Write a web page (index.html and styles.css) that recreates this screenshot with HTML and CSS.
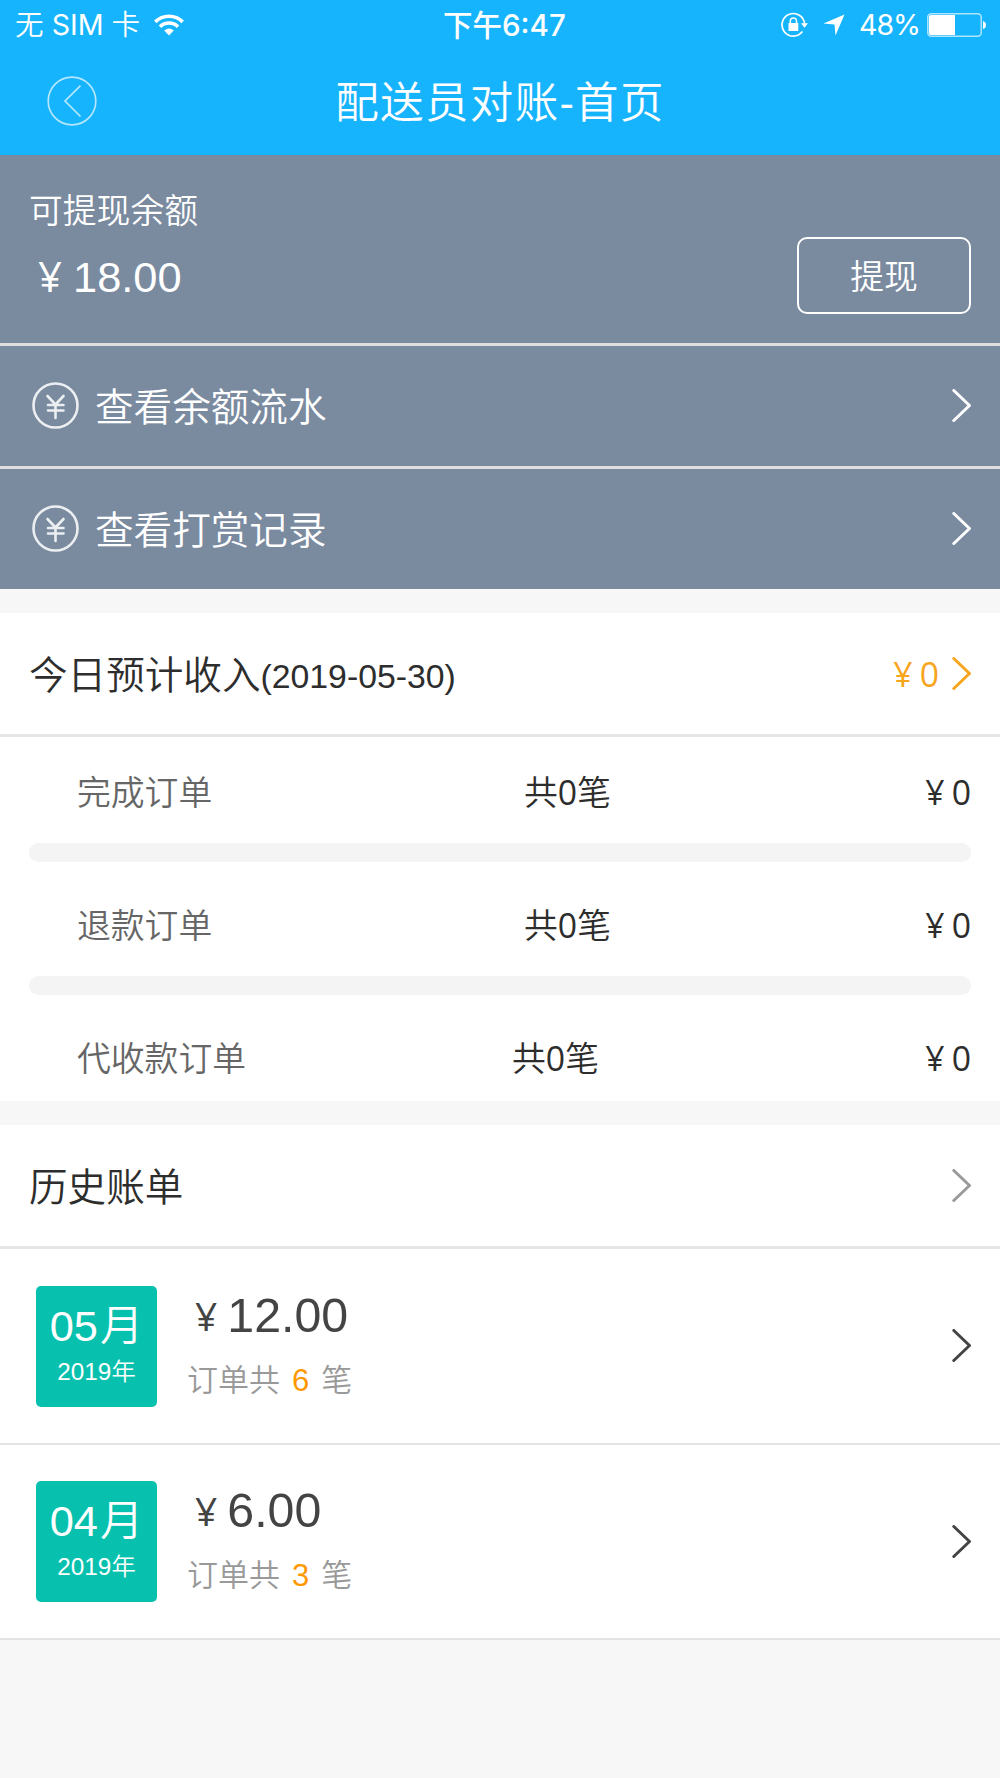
FILE: index.html
```html
<!DOCTYPE html>
<html lang="zh-CN">
<head>
<meta charset="utf-8">
<title>配送员对账-首页</title>
<link rel="stylesheet" href="styles.css">
</head>
<body>
<svg width="0" height="0" class="defs">
  <symbol id="chevron" viewBox="0 0 20 34"><path d="M2.800 1.500 18.500 16.500 2.800 31.500" fill="none" stroke="currentColor" stroke-width="3" stroke-linecap="round" stroke-linejoin="round"/></symbol>
  <symbol id="yuan" viewBox="0 0 48 48"><g fill="none" stroke="currentColor" stroke-linecap="round"><circle cx="23.500" cy="23.500" r="22" stroke-width="2.600"/><path d="M15.500 14 23.500 22.500 31.500 14M23.500 22.500V36M16 23H31.500M16 28.500H31.500" stroke-width="2.600"/></g></symbol>
</svg>
<header class="header">
  <div class="status">
    <div class="status-left">
      <span class="carrier">无 <span class="sim">SIM</span> 卡</span>
      <svg class="wifi" viewBox="0 0 30 22"><g fill="none" stroke="#fff" stroke-width="3.600"><path d="M1.300 7.900A19.500 19.500 0 0 1 28.700 7.900"/><path d="M6 12.700A12.800 12.800 0 0 1 24 12.700"/></g><path d="M10.200 16.400Q15 12.600 19.800 16.400L15 21.500Z" fill="#fff"/></svg>
    </div>
    <div class="time">下午6:47</div>
    <div class="status-right">
      <svg class="lock" viewBox="0 0 28 26"><path d="M21.400 19.600A11.300 11.300 0 1 1 23.600 12" fill="none" stroke="#fff" stroke-width="1.700"/><path d="M20 11.300H27L23.500 15.800Z" fill="#fff"/><path d="M7.500 11H17.300V19H7.500Z" fill="#fff"/><path d="M9.300 11.500V9A3.100 3.100 0 0 1 15.500 9V11.500" fill="none" stroke="#fff" stroke-width="1.500"/></svg>
      <svg class="arrow" viewBox="0 0 22 22"><path d="M21.500.5 12.500 21.500 11.500 10.500.5 9.500Z" fill="#fff"/></svg>
      <span class="percent">48%</span>
      <svg class="battery" viewBox="0 0 60 24"><rect x=".8" y=".8" width="53.400" height="22.400" rx="3.500" fill="none" stroke="#fff" stroke-opacity=".65" stroke-width="1.500"/><path d="M4 2H28V22H4Q2 22 2 20V4Q2 2 4 2Z" fill="#fff"/><path d="M56 8Q59 9 59 12T56 16Z" fill="#fff"/></svg>
    </div>
  </div>
  <div class="nav">
    <svg class="back" viewBox="0 0 50 50"><g fill="none" stroke="#fff" stroke-opacity=".68" stroke-width="1.700"><circle cx="25" cy="25" r="23.800"/><path d="M33.500 9.700 18 25 33.500 40.500"/></g></svg>
    <h1 class="title">配送员对账<span class="latin">-</span>首页</h1>
    <span class="nav-space"></span>
  </div>
</header>
<main>
  <section class="wallet">
    <div class="balance">
      <div class="balance-info">
        <div class="label">可提现余额</div>
        <div class="amount"><span class="yen">¥</span>18.00</div>
      </div>
      <button class="withdraw">提现</button>
    </div>
    <a class="link"><svg class="yuan"><use href="#yuan"/></svg><span class="link-text">查看余额流水</span><svg class="chev"><use href="#chevron"/></svg></a>
    <a class="link"><svg class="yuan"><use href="#yuan"/></svg><span class="link-text">查看打赏记录</span><svg class="chev"><use href="#chevron"/></svg></a>
  </section>
  <section class="card today">
    <div class="head">
      <div class="head-title">今日预计收入<span class="date">(2019-05-30)</span></div>
      <div class="income"><span class="yen">¥</span>0</div>
      <svg class="chev orange"><use href="#chevron"/></svg>
    </div>
    <div class="row first"><span class="kind">完成订单</span><span class="count">共<span class="latin">0</span>笔</span><span class="sum"><span class="yen">¥</span>0</span></div>
    <div class="bar"></div>
    <div class="row"><span class="kind">退款订单</span><span class="count">共<span class="latin">0</span>笔</span><span class="sum"><span class="yen">¥</span>0</span></div>
    <div class="bar"></div>
    <div class="row last"><span class="kind">代收款订单</span><span class="count">共<span class="latin">0</span>笔</span><span class="sum"><span class="yen">¥</span>0</span></div>
  </section>
  <section class="card history">
    <div class="head"><div class="head-title">历史账单</div><svg class="chev gray"><use href="#chevron"/></svg></div>
    <a class="bill">
      <div class="badge"><div class="month">05<span class="unit">月</span></div><div class="year">2019<span class="cjk">年</span></div></div>
      <div class="bill-info"><div class="total"><span class="yen">¥</span>12.00</div><div class="orders">订单共<span class="num">6</span>笔</div></div>
      <svg class="chev"><use href="#chevron"/></svg>
    </a>
    <a class="bill">
      <div class="badge"><div class="month">04<span class="unit">月</span></div><div class="year">2019<span class="cjk">年</span></div></div>
      <div class="bill-info"><div class="total"><span class="yen">¥</span>6.00</div><div class="orders">订单共<span class="num">3</span>笔</div></div>
      <svg class="chev"><use href="#chevron"/></svg>
    </a>
  </section>
</main>
</body>
</html>
```
FILE: styles.css
```css
* { box-sizing: border-box; }
body {
  margin: 0;
  width: 1000px;
  min-height: 1778px;
  background: #f7f7f7;
  color: #2d2d2d;
  font-family: "Open Sans", "Noto Sans CJK SC", sans-serif;
  font-weight: 350;
  font-size: 33.8px;
}
svg { display: block; flex: none; }
.defs { position: absolute; }
.header { height: 155px; background: #17b4fe; color: #fff; }
.status {
  height: 50px;
  display: grid;
  grid-template-columns: 428px auto 1fr;
  align-items: center;
  padding: 0 13px 0 15px;
  font: 400 29px/50px Inter, "Noto Sans CJK SC", sans-serif;
}
.carrier { font-size: 28.6px; font-weight: 350; }
.sim { font-weight: 400; }
.status-left { display: flex; align-items: center; gap: 14px; }
.time { font-size: 29.5px; font-weight: 500; }
.status-right { display: flex; align-items: center; justify-content: flex-end; }
.wifi { width: 30px; height: 22px; }
.lock { width: 28px; height: 26px; margin-right: 14px; }
.arrow { width: 22px; height: 22px; margin-right: 14px; }
.percent { font-size: 28.5px; margin-right: 7px; letter-spacing: -1px; }
.battery { width: 60px; height: 24px; }
.nav { display: flex; align-items: center; height: 105px; padding: 0 47px 0 47px; }
.back { width: 50px; height: 50px; margin-bottom: 3px; }
.nav-space { width: 50px; }
.title {
  flex: 1;
  margin: 0;
  font-size: 43.5px;
  line-height: 103px;
  height: 105px;
  font-weight: 350;
  letter-spacing: 1.4px;
  text-align: center;
}
.latin { font-weight: 400; }
.wallet { background: #7a8a9f; color: #fff; height: 434px; }
.balance {
  height: 188px;
  display: flex;
  justify-content: space-between;
  padding: 0 29px;
}
.label { margin-top: 30px; line-height: 50px; }
.amount { font: 400 43.4px/60px "Liberation Sans", sans-serif; margin-top: 11px; padding-left: 9px; }
.yen { font-family: "Open Sans", sans-serif; font-weight: 400; }
.amount .yen { font-size: 42px; margin-right: 11px; }
.withdraw {
  width: 174px;
  height: 77px;
  margin-top: 82px;
  border: 2px solid #fff;
  border-radius: 10px;
  background: none;
  color: #fff;
  font: inherit;
  line-height: 70px;
  padding: 0;
}
.link {
  display: flex;
  align-items: center;
  height: 123px;
  border-top: 3px solid #dedede;
  padding: 0 29px 0 32px;
}
.yuan { width: 48px; height: 48px; color: #eceff2; }
.link-text { flex: 1; margin-left: 15px; font-size: 38.6px; line-height: 120px; }
.chev { width: 20px; height: 34px; }
.card { background: #fff; margin-top: 24px; }
.head {
  display: flex;
  align-items: center;
  height: 124px;
  padding: 0 29px;
  border-bottom: 3px solid #e5e5e5;
}
.head-title { flex: 1; font-size: 38.6px; line-height: 120px; }
.date { font: 400 33.8px "Liberation Sans", sans-serif; vertical-align: 1px; }
.income { color: #f8a51e; margin-right: 12px; font-weight: 400; }
.sum { font-weight: 400; }
.income .yen, .sum .yen { margin-right: 7px; }
.orange { color: #f8a51e; }
.gray { color: #9a9a9a; }
.row { display: flex; height: 114px; padding: 10px 29px 0 77px; line-height: 106px; }
.row.first { height: 106px; padding-top: 2px; }
.row.last { height: 106px; }
.kind { width: 447px; color: #666; }
.last .kind { width: 435px; }
.count { flex: 1; }
.bar { height: 19px; margin: 0 29px; border-radius: 10px; background: #f4f4f4; }
.bill {
  display: flex;
  align-items: center;
  height: 196px;
  padding: 0 29px 0 36px;
  border-bottom: 2px solid #e3e3e3;
  color: #444;
}
.bill:last-child { height: 195px; }
.badge {
  width: 121px;
  height: 121px;
  border-radius: 5px;
  background: #07c1ae;
  color: #fff;
  font-family: "Liberation Sans", "Noto Sans CJK SC", sans-serif;
  text-align: center;
}
.month { font-size: 43.4px; line-height: 50px; margin-top: 15px; }
.unit { margin-left: 2px; }
.year { font-size: 24.3px; line-height: 30px; margin-top: 6px; }
.bill-info { flex: 1; margin: 0 0 4px 30px; }
.total { font: 400 48.3px/60px "Liberation Sans", sans-serif; padding-left: 8px; }
.total .yen { font-size: 39px; margin-right: 10px; vertical-align: 1px; }
.orders { font-size: 31px; line-height: 46px; color: #999; margin-top: 10px; }
.num { font-family: "Liberation Sans", sans-serif; color: #ff9800; margin: 0 12px; }
```
